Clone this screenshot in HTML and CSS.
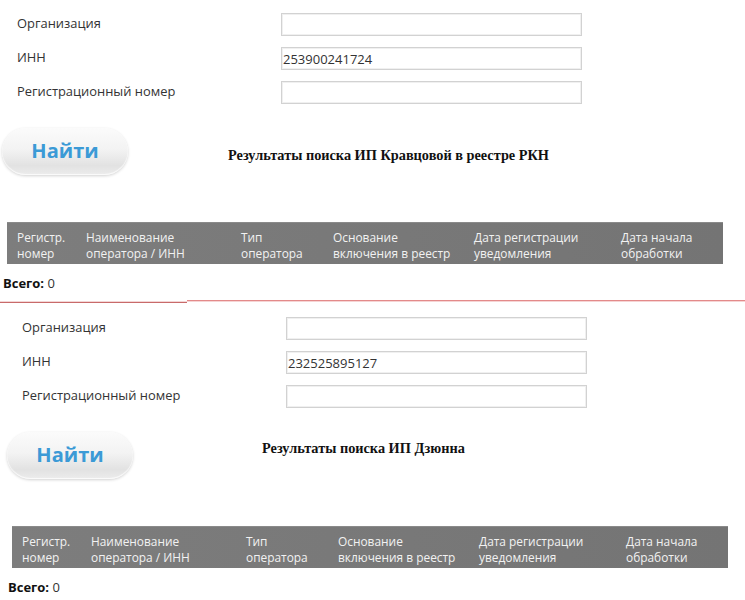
FILE: index.html
```html
<!DOCTYPE html>
<html lang="ru">
<head>
<meta charset="utf-8">
<title>Поиск в реестре РКН</title>
<link rel="stylesheet" href="styles.css">
</head>
<body>
<section class="panel">
  <div class="form">
    <label class="label">Организация</label>
    <input class="field" type="text" value="">
    <label class="label">ИНН</label>
    <input class="field" type="text" value="253900241724">
    <label class="label">Регистрационный номер</label>
    <input class="field" type="text" value="">
  </div>
  <div class="actions">
    <button class="find">Найти</button>
    <div class="title title-first">Результаты поиска ИП Кравцовой в реестре РКН</div>
  </div>
  <div class="thead">
    <div class="th c1">Регистр.<br>номер</div>
    <div class="th c2">Наименование<br>оператора / ИНН</div>
    <div class="th c3">Тип<br>оператора</div>
    <div class="th c4">Основание<br>включения в реестр</div>
    <div class="th c5">Дата регистрации<br>уведомления</div>
    <div class="th c6">Дата начала<br>обработки</div>
  </div>
  <div class="total"><b>Всего:</b> 0</div>
</section>
<div class="divider"><span class="seg-left"></span><span class="seg-right"></span></div>
<section class="panel panel-second">
  <div class="form">
    <label class="label">Организация</label>
    <input class="field" type="text" value="">
    <label class="label">ИНН</label>
    <input class="field" type="text" value="232525895127">
    <label class="label">Регистрационный номер</label>
    <input class="field" type="text" value="">
  </div>
  <div class="actions">
    <button class="find">Найти</button>
    <div class="title title-second">Результаты поиска ИП Дзюнна</div>
  </div>
  <div class="thead">
    <div class="th c1">Регистр.<br>номер</div>
    <div class="th c2">Наименование<br>оператора / ИНН</div>
    <div class="th c3">Тип<br>оператора</div>
    <div class="th c4">Основание<br>включения в реестр</div>
    <div class="th c5">Дата регистрации<br>уведомления</div>
    <div class="th c6">Дата начала<br>обработки</div>
  </div>
  <div class="total"><b>Всего:</b> 0</div>
</section>
</body>
</html>
```
FILE: styles.css
```css
html, body {
  margin: 0;
  padding: 0;
  background: #ffffff;
}
body {
  font-family: "Open Sans", "Liberation Sans", sans-serif;
  color: #333333;
  width: 745px;
  height: 600px;
  overflow: hidden;
}
.panel {
  height: 300px;
  box-sizing: border-box;
}
.panel-second {
  margin-left: 5px;
  height: 297px;
  padding-top: 13px;
}
.panel:first-child {
  padding-top: 13px;
}
.form {
  display: grid;
  grid-template-columns: 264px 301px;
  row-gap: 11px;
  padding-left: 17px;
}
.label {
  font-size: 12.9px;
  line-height: 18px;
  color: #333;
  margin-top: 1px;
}
.field {
  box-sizing: border-box;
  width: 301px;
  height: 23px;
  margin: 0;
  padding: 0 0 0 1px;
  border: 1px solid #d2d2d2;
  box-shadow: inset 0 0 0 1px #f0f0f0;
  background: #fff;
  font-family: "Open Sans", "Liberation Sans", sans-serif;
  font-size: 13px;
  color: #333;
  outline: none;
}
.actions {
  display: flex;
  align-items: flex-start;
  margin-top: 24px;
  height: 47px;
}
.find {
  margin: 0 0 0 2px;
  width: 126px;
  height: 47px;
  border: none;
  border-radius: 24px;
  background: linear-gradient(to bottom, #fbfbfb 0%, #f3f3f3 45%, #e2e2e2 80%, #ececec 100%);
  box-shadow: 0 1px 3px rgba(0,0,0,0.18), inset 0 -1px 1px rgba(255,255,255,0.8);
  font-family: "Open Sans", "Liberation Sans", sans-serif;
  font-weight: bold;
  font-size: 20px;
  color: #3b9ad6;
  padding: 0 0 2px 0;
}
.title {
  font-family: "Liberation Serif", "Times New Roman", serif;
  font-weight: bold;
  font-size: 14.3px;
  color: #111;
  line-height: 16px;
  white-space: nowrap;
}
.title-first {
  margin-left: 100px;
  margin-top: 19px;
}
.title-second {
  margin-left: 129px;
  margin-top: 8px;
}
.thead {
  display: flex;
  margin-top: 47px;
  margin-left: 7px;
  width: 716px;
  height: 42px;
  box-sizing: border-box;
  padding: 6px 0 0 10px;
  background: linear-gradient(to right, #7d7d7d, #747474);
  border-top: 1px solid #8a8a8a;
}
.th {
  font-size: 11.9px;
  line-height: 16px;
  color: #f2f2f2;
  white-space: nowrap;
}
.c1 { width: 69px; }
.c2 { width: 155px; }
.c3 { width: 92px; }
.c4 { width: 141px; }
.c5 { width: 147px; }
.c6 { flex: 1; }
.total {
  margin-top: 10px;
  margin-left: 3px;
  font-size: 13px;
  line-height: 18px;
  color: #333;
}
.total b {
  color: #111;
}
.divider {
  display: flex;
  height: 4px;
}
.seg-left {
  width: 187px;
  height: 1px;
  margin-top: 2px;
  background: #c86a6a;
  box-shadow: 0 -1px 0 #f3d6d6;
}
.seg-right {
  flex: 1;
  height: 1px;
  margin-top: 0;
  background: #e38a8a;
  box-shadow: 0 1px 0 #f6d4d4;
}
```
